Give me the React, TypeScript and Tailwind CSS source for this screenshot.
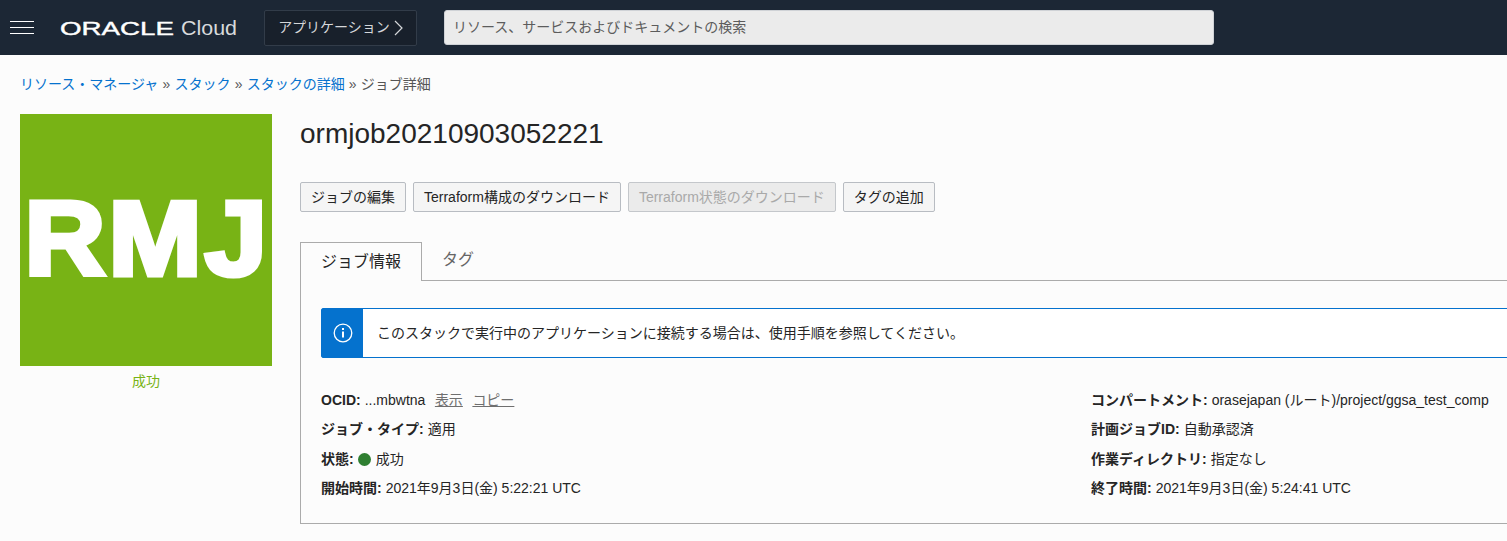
const font = "font-['Liberation_Sans','Noto_Sans_CJK_JP',sans-serif]";

function Field({ label, children }: { label: string; children: React.ReactNode }) {
  return (
    <div className="h-[29.25px] flex items-center text-[14px] text-[#252525] whitespace-nowrap">
      <b className="font-bold mr-1">{label}</b>
      {children}
    </div>
  );
}

export default function App() {
  return (
    <div className={`${font} w-[1507px] h-[541px] overflow-hidden bg-[#fcfcfc]`}>
      {/* top bar */}
      <header className="h-[55px] bg-[#1c2735] flex items-center">
        <div className="ml-[10px] w-6 flex flex-col gap-[5px]">
          <span className="h-px bg-white" />
          <span className="h-px bg-white" />
          <span className="h-px bg-white" />
        </div>
        <svg className="ml-[26px]" width="178" height="24" viewBox="0 0 178 24">
          <text x="0" y="18.5" fontSize="19" fontWeight="400" fill="#fff" stroke="#fff" strokeWidth="0.4" textLength="114" lengthAdjust="spacingAndGlyphs" fontFamily="Liberation Sans">ORACLE</text>
          <text x="121" y="19" fontSize="21" fill="#d8dadc" textLength="56" lengthAdjust="spacingAndGlyphs" fontFamily="Liberation Sans">Cloud</text>
        </svg>
        <button className="ml-[26px] h-[36px] w-[153px] bg-[#18202b] border border-[#323c49] rounded-[2px] text-[#d5d7da] text-[14px] flex items-center justify-center gap-1">
          アプリケーション
          <svg width="9" height="16" viewBox="0 0 9 16" fill="none" stroke="#d5d7da" strokeWidth="1.2"><path d="M1 1l7 7-7 7" /></svg>
        </button>
        <div className="ml-[27px] h-[35px] w-[770px] bg-[#ebebeb] border border-[#cfd2d6] rounded-[3px] flex items-center px-2 text-[14px] text-[#5c5c5c]">
          リソース、サービスおよびドキュメントの検索
        </div>
      </header>

      {/* breadcrumbs */}
      <nav className="mt-[19px] ml-5 h-5 flex items-center gap-[4.2px] text-[14px] text-[#555]">
        <a className="text-[#0572ce]">リソース・マネージャ</a>
        <span>»</span>
        <a className="text-[#0572ce]">スタック</a>
        <span>»</span>
        <a className="text-[#0572ce]">スタックの詳細</a>
        <span>»</span>
        <span>ジョブ詳細</span>
      </nav>

      <div className="mt-5 ml-5 flex">
        {/* job badge */}
        <aside className="w-[252px] shrink-0 mr-7">
          <div className="h-[252px] bg-[#78b315] flex items-center justify-center text-white font-bold text-[105px] tracking-[3px] pb-[3px] pl-[2px] leading-none font-['Liberation_Sans'] [-webkit-text-stroke:5px_white]">
            <span className="block scale-x-[1.065]">RMJ</span>
          </div>
          <p className="mt-[5px] text-center text-[14px] text-[#78b315]">成功</p>
        </aside>

        <main className="w-[1300px] shrink-0">
          <h1 className="text-[28px] leading-[40px] text-[#252525]">ormjob20210903052221</h1>

          <div className="mt-[28px] flex gap-[7px] text-[14px] text-[#252525]">
            <button className="h-[30px] px-[10px] bg-[#f5f5f5] border border-[#b8bcc2] rounded-[2px]">ジョブの編集</button>
            <button className="h-[30px] px-[10px] bg-[#f5f5f5] border border-[#b8bcc2] rounded-[2px]">Terraform構成のダウンロード</button>
            <button className="h-[30px] px-[10px] bg-[#ebebeb] border border-[#c4c7cb] rounded-[2px] text-[#a9a9a9]">Terraform状態のダウンロード</button>
            <button className="h-[30px] px-[10px] bg-[#f5f5f5] border border-[#b8bcc2] rounded-[2px]">タグの追加</button>
          </div>

          {/* tabs */}
          <div className="mt-[30px] flex h-[39px] text-[16px]">
            <div className="w-[122px] border border-b-0 border-[#ababab] bg-[#fcfcfc] flex items-center justify-center text-[#252525] relative z-10 h-[39px]">ジョブ情報</div>
            <div className="w-[72px] flex items-center justify-center text-[#666] pb-1">タグ</div>
          </div>

          <section className="-mt-px border border-[#ababab] h-[244px] pt-[27px] pl-5">
            <div className="flex h-[50px] border border-[#0572ce] rounded-l-[2px] bg-white">
              <div className="w-[41px] bg-[#0572ce] flex items-center justify-center">
                <svg width="20" height="20" viewBox="0 0 20 20" fill="none" stroke="#fff" strokeWidth="1.3">
                  <circle cx="10" cy="10" r="8.8" />
                  <path d="M10 8.5v6" strokeWidth="2" />
                  <path d="M10 5v2" strokeWidth="2" />
                </svg>
              </div>
              <p className="ml-[14px] flex items-center text-[14px] text-[#252525]">このスタックで実行中のアプリケーションに接続する場合は、使用手順を参照してください。</p>
            </div>

            <div className="mt-[28px] flex">
              <div className="w-[770px]">
                <Field label="OCID:">
                  ...mbwtna
                  <a className="ml-[9.5px] underline text-[#6f6f6f]">表示</a>
                  <a className="ml-[9.5px] underline text-[#6f6f6f]">コピー</a>
                </Field>
                <Field label="ジョブ・タイプ:">適用</Field>
                <Field label="状態:">
                  <span className="w-[13px] h-[13px] rounded-full bg-[#2f7f31] mr-[5px]" />
                  成功
                </Field>
                <Field label="開始時間:">2021年9月3日(金) 5:22:21 UTC</Field>
              </div>
              <div>
                <Field label="コンパートメント:">orasejapan (ルート)/project/ggsa_test_comp</Field>
                <Field label="計画ジョブID:">自動承認済</Field>
                <Field label="作業ディレクトリ:">指定なし</Field>
                <Field label="終了時間:">2021年9月3日(金) 5:24:41 UTC</Field>
              </div>
            </div>
          </section>
        </main>
      </div>
    </div>
  );
}
